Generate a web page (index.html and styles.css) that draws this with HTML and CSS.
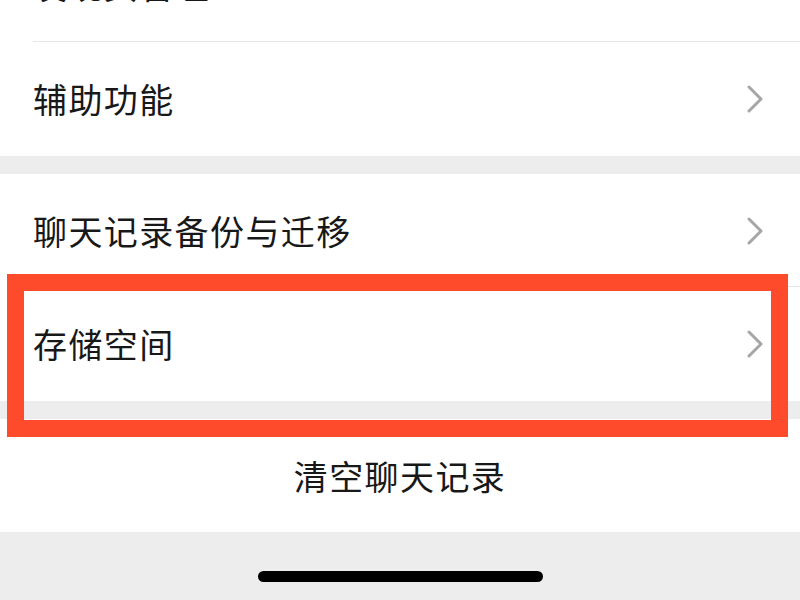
FILE: index.html
```html
<!DOCTYPE html>
<html lang="zh-CN">
<head>
<meta charset="utf-8">
<link rel="stylesheet" href="styles.css">
</head>
<body>
<div class="screen">
  <div class="group group-first">
    <div class="row sep">
      <span class="label">发现页管理</span>
      <svg class="chev" width="16" height="28" viewBox="0 0 16 28"><polyline points="2,2 14,14 2,26" fill="none" stroke="#a6a6a6" stroke-width="3" stroke-linecap="round" stroke-linejoin="round"/></svg>
    </div>
    <div class="row">
      <span class="label">辅助功能</span>
      <svg class="chev" width="16" height="28" viewBox="0 0 16 28"><polyline points="2,2 14,14 2,26" fill="none" stroke="#a6a6a6" stroke-width="3" stroke-linecap="round" stroke-linejoin="round"/></svg>
    </div>
  </div>
  <div class="group">
    <div class="row sep short">
      <span class="label">聊天记录备份与迁移</span>
      <svg class="chev" width="16" height="28" viewBox="0 0 16 28"><polyline points="2,2 14,14 2,26" fill="none" stroke="#a6a6a6" stroke-width="3" stroke-linecap="round" stroke-linejoin="round"/></svg>
    </div>
    <div class="row">
      <span class="label">存储空间</span>
      <svg class="chev" width="16" height="28" viewBox="0 0 16 28"><polyline points="2,2 14,14 2,26" fill="none" stroke="#a6a6a6" stroke-width="3" stroke-linecap="round" stroke-linejoin="round"/></svg>
    </div>
  </div>
  <div class="group">
    <div class="row center short">
      <span class="label">清空聊天记录</span>
    </div>
  </div>
  <div class="footer">
    <div class="home-bar"></div>
  </div>
  <div class="highlight"></div>
</div>
</body>
</html>
```
FILE: styles.css
```css
html, body {
  margin: 0;
  padding: 0;
}
body {
  background: #ededed;
  font-family: "Noto Sans CJK SC", "Noto Sans", sans-serif;
  color: #181818;
}
.screen {
  position: relative;
  width: 800px;
  height: 600px;
  overflow: hidden;
  background: #ededed;
  display: flex;
  flex-direction: column;
  gap: 18px;
}
.group {
  background: #ffffff;
  display: flex;
  flex-direction: column;
}
.group-first {
  margin-top: -72px;
}
.row {
  height: 114px;
  display: flex;
  align-items: center;
  justify-content: space-between;
  padding: 0 37px 0 33px;
  box-sizing: border-box;
  position: relative;
  flex-shrink: 0;
}
.row.short {
  height: 113px;
}
.row.sep::after {
  content: "";
  position: absolute;
  left: 33px;
  right: 0;
  bottom: 0;
  height: 1px;
  background: #e6e6e6;
}
.row.center {
  justify-content: center;
  padding: 0;
}
.label {
  font-size: 34px;
  letter-spacing: 1.4px;
  line-height: 1;
}
.chev {
  display: block;
}
.footer {
  flex: 1;
  margin-top: -18px;
  display: flex;
  justify-content: center;
  padding-top: 39px;
}
.home-bar {
  width: 285px;
  height: 11px;
  border-radius: 6px;
  background: #000;
}
.highlight {
  position: absolute;
  left: 7px;
  top: 274px;
  width: 781px;
  height: 163px;
  box-sizing: border-box;
  border: 17px solid #fd4b2b;
}
```
